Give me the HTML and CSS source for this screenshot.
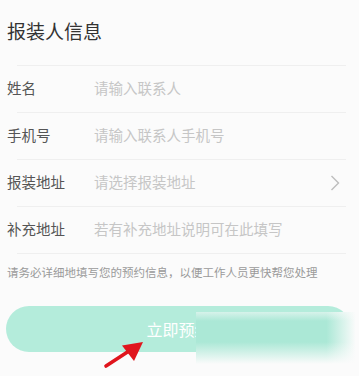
FILE: index.html
```html
<!DOCTYPE html>
<html lang="zh-CN">
<head>
<meta charset="utf-8">
<title>报装人信息</title>
<link rel="stylesheet" href="styles.css">
</head>
<body>
<div class="page">
  <div class="title">报装人信息</div>
  <div class="divider"></div>
  <div class="row"><span class="label">姓名</span><span class="ph">请输入联系人</span></div>
  <div class="divider"></div>
  <div class="row"><span class="label">手机号</span><span class="ph">请输入联系人手机号</span></div>
  <div class="divider"></div>
  <div class="row"><span class="label">报装地址</span><span class="ph">请选择报装地址</span>
    <svg class="chev" width="10" height="16" viewBox="0 0 10 16"><path d="M1.5 1 L8.5 8 L1.5 15" fill="none" stroke="#bdbdbd" stroke-width="1.4"/></svg>
  </div>
  <div class="divider"></div>
  <div class="row"><span class="label">补充地址</span><span class="ph">若有补充地址说明可在此填写</span></div>
  <div class="divider"></div>
  <p class="note">请务必详细地填写您的预约信息，以便工作人员更快帮您处理</p>
  <div class="btn-wrap">
    <div class="btn">立即预约</div>
  </div>
  <div class="blur"></div>
  <svg class="arrow" width="50" height="36" viewBox="0 0 50 36">
    <path d="M6 30 L29 15" stroke="#e0151d" stroke-width="3.6" stroke-linecap="round"/>
    <path d="M43 6 L22 9.5 L34 25 Z" fill="#e0151d"/>
  </svg>
</div>
</body>
</html>
```

FILE: styles.css
```css
html, body {
  margin: 0;
  padding: 0;
  background: #fbfbfb;
}
.page {
  position: relative;
  width: 359px;
  height: 376px;
  overflow: hidden;
  font-family: "Noto Sans CJK SC", "Noto Sans", sans-serif;
}
.title {
  box-sizing: border-box;
  height: 65px;
  padding: 17px 7px 0;
  font-size: 19px;
  line-height: 28px;
  color: #333333;
}
.divider {
  height: 1px;
  margin: 0 13px 0 17px;
  background: #efefef;
}
.row {
  box-sizing: border-box;
  height: 46px;
  padding: 0 7px 3px;
  display: flex;
  align-items: center;
  font-size: 14.5px;
}
.label {
  width: 87px;
  color: #555555;
}
.ph {
  flex: 1;
  color: #c6c6c6;
}
.chev {
  margin-right: 12px;
  margin-top: 3px;
}
.note {
  margin: 9px 7px 0;
  font-size: 11.5px;
  line-height: 18px;
  color: #9a9a9a;
  white-space: nowrap;
}
.btn-wrap {
  padding: 25px 8px 0 6px;
}
.btn {
  height: 46px;
  border-radius: 23px;
  background: #b4ecdb;
  color: #ffffff;
  font-size: 16px;
  display: flex;
  align-items: center;
  justify-content: center;
}
.blur {
  position: absolute;
  left: 196px;
  top: 312px;
  width: 163px;
  height: 64px;
  background:
    linear-gradient(to bottom, rgba(251,251,251,0.55) 0, rgba(251,251,251,0) 9px, rgba(251,251,251,0) 30px, #fbfbfb 52px),
    linear-gradient(to right, #abe8d6 0, #abe8d6 80%, #fbfbfb 98%);
}
.arrow {
  position: absolute;
  left: 100px;
  top: 336px;
}
```
